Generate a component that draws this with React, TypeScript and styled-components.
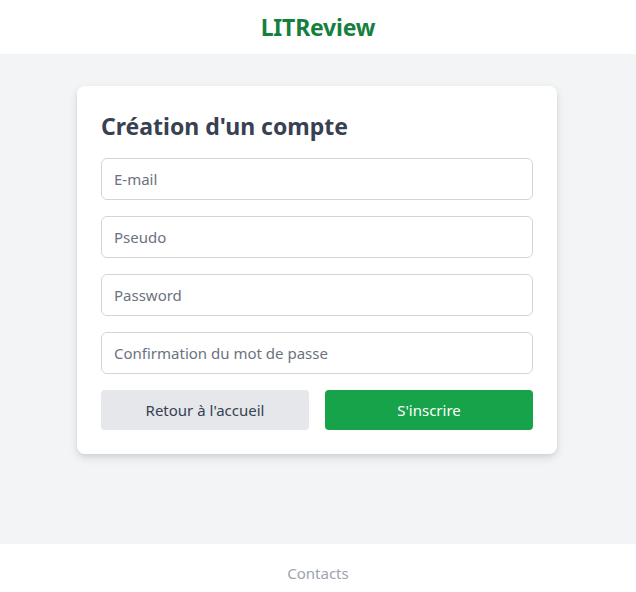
import styled, { createGlobalStyle } from 'styled-components';

const GlobalStyle = createGlobalStyle`
  * { box-sizing: border-box; }
  html, body { margin: 0; padding: 0; }
  body {
    font-family: "Noto Sans", "Open Sans", sans-serif;
    background: #ffffff;
  }
`;

const Page = styled.div`
  display: flex;
  flex-direction: column;
  min-height: 100vh;
`;

const Header = styled.header`
  height: 54px;
  display: flex;
  align-items: center;
  justify-content: center;
  background: #ffffff;
`;

const Brand = styled.h1`
  margin: 0;
  font-size: 23px;
  font-weight: 700;
  color: #15803d;
  letter-spacing: -0.2px;
`;

const Main = styled.main`
  flex: 1;
  background: #f3f4f6;
  padding-top: 32px;
  display: flex;
  justify-content: center;
  align-items: flex-start;
`;

const Card = styled.form`
  width: 480px;
  margin-right: 2px;
  background: #ffffff;
  border-radius: 8px;
  padding: 24px;
  box-shadow: 0 4px 10px rgba(0, 0, 0, 0.1), 0 2px 4px rgba(0, 0, 0, 0.06);
  display: flex;
  flex-direction: column;
  gap: 16px;
`;

const Title = styled.h2`
  margin: 0;
  font-size: 23px;
  line-height: 32px;
  font-weight: 700;
  color: #374151;
`;

const Input = styled.input`
  height: 42px;
  width: 100%;
  border: 1px solid #d1d5db;
  border-radius: 6px;
  padding: 0 12px;
  font-family: inherit;
  font-size: 15px;
  color: #374151;
  outline: none;
  &::placeholder {
    color: #6b7280;
  }
`;

const Actions = styled.div`
  display: grid;
  grid-template-columns: 1fr 1fr;
  gap: 16px;
`;

const Button = styled.button<{ $primary?: boolean }>`
  height: 40px;
  border: none;
  border-radius: 4px;
  font-family: inherit;
  font-size: 15px;
  cursor: pointer;
  background: ${(p) => (p.$primary ? '#16a34a' : '#e5e7eb')};
  color: ${(p) => (p.$primary ? '#ffffff' : '#374151')};
`;

const Footer = styled.footer`
  height: 48px;
  padding-top: 18px;
  text-align: center;
  background: #ffffff;
  color: #9ca3af;
  font-size: 15px;
  line-height: 22px;
`;

export default function App() {
  return (
    <Page>
      <GlobalStyle />
      <Header>
        <Brand>LITReview</Brand>
      </Header>
      <Main>
        <Card onSubmit={(e) => e.preventDefault()}>
          <Title>Création d'un compte</Title>
          <Input type="email" placeholder="E-mail" />
          <Input type="text" placeholder="Pseudo" />
          <Input type="password" placeholder="Password" />
          <Input type="password" placeholder="Confirmation du mot de passe" />
          <Actions>
            <Button type="button">Retour à l'accueil</Button>
            <Button type="submit" $primary>
              S'inscrire
            </Button>
          </Actions>
        </Card>
      </Main>
      <Footer>Contacts</Footer>
    </Page>
  );
}
